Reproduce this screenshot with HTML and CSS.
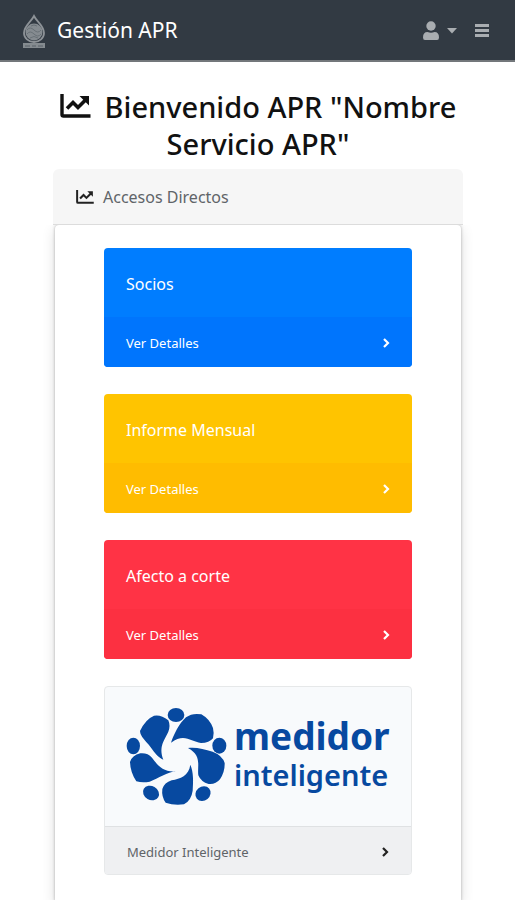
FILE: index.html
```
<!DOCTYPE html>
<html lang="es">
<head>
<meta charset="utf-8">
<meta name="viewport" content="width=device-width, initial-scale=1">
<title>Gestión APR</title>
<link rel="stylesheet" href="styles.css">
</head>
<body>
<svg class="sprite" aria-hidden="true">
  <symbol id="chart" viewBox="0 0 30 24">
    <path d="M1.500 0v20.500q0 1.500 1.500 1.500H30" fill="none" stroke="currentColor" stroke-width="3.400"/>
    <path d="M6.500 14.500 12.500 8.500 17.500 13.500 25 6" fill="none" stroke="currentColor" stroke-width="3.600"/>
    <path d="M19 2H28.500V11.500Z" fill="currentColor"/>
  </symbol>
  <symbol id="chevron" viewBox="0 0 8 10">
    <path d="M2 1 6 5 2 9" fill="none" stroke="currentColor" stroke-width="2.200"/>
  </symbol>
</svg>
<header class="navbar">
  <a class="brand" href="#">
    <svg class="brand-logo" viewBox="0 0 24 36" aria-hidden="true">
      <path d="M12 2C9 8 2 12 2 19a10 9 0 0 0 20 0C22 12 15 8 12 2Z" fill="none" stroke="#8d9297" stroke-width="1.800"/>
      <circle cx="12" cy="18" r="8.500" fill="#858b90"/>
      <path d="M5 16q3-4 7 0t7 0M5 20q3-4 7 0t7 0M8 24q4-3 8 0M9 12q3-2 6 0" fill="none" stroke="#697177" stroke-width="1"/>
      <path d="M1 29H23V34H1Z" fill="#858b90"/>
      <path d="M3 32h5m2 0h4m2 0h5" stroke="#596168" stroke-width="1"/>
    </svg>
    <span>Gestión APR</span>
  </a>
  <nav class="actions">
    <button class="user" type="button" aria-label="Usuario">
      <svg width="16" height="20" viewBox="0 0 16 20" aria-hidden="true"><circle cx="8" cy="5" r="4.700"/><path d="M0 16.500Q0 11 4.500 11Q8 12.500 11.500 11Q16 11 16 16.500Q16 19 14 19H2Q0 19 0 16.500Z"/></svg>
      <svg width="10" height="6" viewBox="0 0 10 6" aria-hidden="true"><path d="M0 0H10L5 5.500Z"/></svg>
    </button>
    <button type="button" aria-label="Menú">
      <svg width="14" height="14" viewBox="0 0 14 14" aria-hidden="true"><path d="M0 0H14V3H0ZM0 5H14V8H0ZM0 10H14V13H0Z"/></svg>
    </button>
  </nav>
</header>
<main class="page">
  <h1><svg class="title-icon" aria-hidden="true"><use href="#chart"/></svg>Bienvenido APR "Nombre Servicio APR"</h1>
  <section class="panel">
    <h2 class="panel-header"><svg class="small-icon" aria-hidden="true"><use href="#chart"/></svg>Accesos Directos</h2>
    <div class="panel-body">
      <article class="card blue">
        <h3>Socios</h3>
        <a href="#">Ver Detalles<svg class="chevron" aria-hidden="true"><use href="#chevron"/></svg></a>
      </article>
      <article class="card yellow">
        <h3>Informe Mensual</h3>
        <a href="#">Ver Detalles<svg class="chevron" aria-hidden="true"><use href="#chevron"/></svg></a>
      </article>
      <article class="card red">
        <h3>Afecto a corte</h3>
        <a href="#">Ver Detalles<svg class="chevron" aria-hidden="true"><use href="#chevron"/></svg></a>
      </article>
      <article class="card light">
        <div class="logo">
          <svg class="logo-mark" viewBox="106 108 303 297" aria-hidden="true">
            <ellipse cx="256" cy="132" rx="25" ry="21"/>
            <ellipse cx="386" cy="224" rx="21" ry="24"/>
            <ellipse cx="337" cy="368" rx="24" ry="21" transform="rotate(-40 337 368)"/>
            <ellipse cx="181" cy="366" rx="25" ry="21" transform="rotate(30 181 366)"/>
            <ellipse cx="128" cy="225" rx="20" ry="25"/>
            <path d="M148 180Q164 145 190 134Q211 130 233 148Q240 164 233 182C222 207 203 225 218 266C202 260 192 246 180 229C165 208 149 198 148 180Z"/>
            <path d="M241 215C250 190 264 159 286 139Q305 125 332 130Q357 144 367 171Q371 186 367 202Q356 216 331 216C301 213 282 185 241 215Z"/>
            <path d="M292 231C315 227 340 235 366 242Q395 253 402 276Q403 303 388 325Q375 341 354 339Q331 333 323 313C319 286 335 254 292 231Z"/>
            <path d="M299 281C309 304 308 333 306 359Q302 388 280 400Q249 404 225 395Q212 377 215 354Q221 335 243 328C269 322 294 316 299 281Z"/>
            <path d="M255 301C231 304 203 322 177 332Q155 336 137 331Q119 304 118 273Q124 253 149 247Q171 245 184 260C201 283 217 304 255 301Z"/>
          </svg>
          <div class="wordmark"><span class="word-top">medidor</span><span class="word-bottom">inteligente</span></div>
        </div>
        <a href="#">Medidor Inteligente<svg class="chevron" aria-hidden="true"><use href="#chevron"/></svg></a>
      </article>
    </div>
  </section>
</main>
</body>
</html>
```
FILE: styles.css
```
* { box-sizing: border-box; }
body {
  margin: 0;
  background: #fff;
  color: #111;
  font-family: "Noto Sans", "Open Sans", sans-serif;
}
h1, h2, h3 { margin: 0; }
a { color: inherit; text-decoration: none; }
.sprite { display: none; }
.navbar {
  display: flex;
  align-items: center;
  justify-content: space-between;
  height: 62px;
  padding: 0 26px 0 22px;
  background: #323a43;
  border-bottom: 2px solid #73777b;
}
.brand {
  display: flex;
  align-items: center;
  gap: 11px;
  color: #fff;
  font-size: 21px;
}
.brand-logo { width: 24px; height: 36px; margin-top: 4px; }
.actions { display: flex; align-items: center; gap: 18px; padding-top: 2px; }
.actions button {
  display: flex;
  align-items: center;
  gap: 8px;
  padding: 0;
  border: 0;
  background: none;
}
.actions svg { fill: #a9adb1; }
.page { padding: 26px 52px 0 53px; }
h1 {
  font-size: 29px;
  font-weight: 500;
  line-height: 37px;
  text-align: center;
}
.title-icon { width: 31px; height: 24px; margin-right: 14px; }
.panel { margin-top: 7px; }
.panel-header {
  display: flex;
  align-items: center;
  gap: 9px;
  height: 56px;
  padding: 0 23px;
  background: #f6f6f6;
  border-bottom: 1px solid #dcdcdc;
  border-radius: 6px 6px 0 0;
  color: #606468;
  font-size: 16px;
  font-weight: 400;
}
.small-icon { width: 18px; height: 14px; color: #222; }
.panel-body {
  display: grid;
  gap: 27px;
  margin: 0 2px;
  padding: 23px 49px 26px;
  background: #fff;
  border-radius: 4px 4px 0 0;
  box-shadow: 0 0 3px #aaa, 0 4px 14px #ddd;
  clip-path: inset(0 -20px 0 -20px);
}
.card {
  display: flex;
  flex-direction: column;
  overflow: hidden;
  border-radius: 4px;
  color: #fff;
}
.card h3 {
  padding: 24px 22px 20px;
  font-size: 16px;
  font-weight: 400;
  line-height: 25px;
}
.card a {
  display: flex;
  align-items: center;
  justify-content: space-between;
  height: 50px;
  padding: 2px 22px 0;
  font-size: 13px;
}
.chevron { width: 8px; height: 10px; }
.blue { background: #007dff; }
.blue a { background: #0075fd; }
.yellow { background: #ffc400; }
.yellow a { background: #ffbc00; }
.red { background: #ff3345; }
.red a { background: #fc3041; }
.light {
  background: #f8fafc;
  border: 1px solid #e6e8e9;
  color: #606468;
}
.light a {
  height: 48px;
  background: #eff0f2;
  border-top: 1px solid #dfe1e3;
}
.light .chevron { color: #222; }
.logo {
  display: flex;
  align-items: center;
  gap: 7px;
  height: 139px;
  padding: 0 21px;
  color: #0749a0;
}
.logo-mark { flex: none; width: 101px; height: 99px; fill: currentColor; }
.wordmark { display: flex; flex-direction: column; padding-bottom: 4px; }
.word-top { font-size: 37px; font-weight: 700; line-height: 40px; }
.word-bottom { font-size: 29px; font-weight: 600; line-height: 38px; }
```
